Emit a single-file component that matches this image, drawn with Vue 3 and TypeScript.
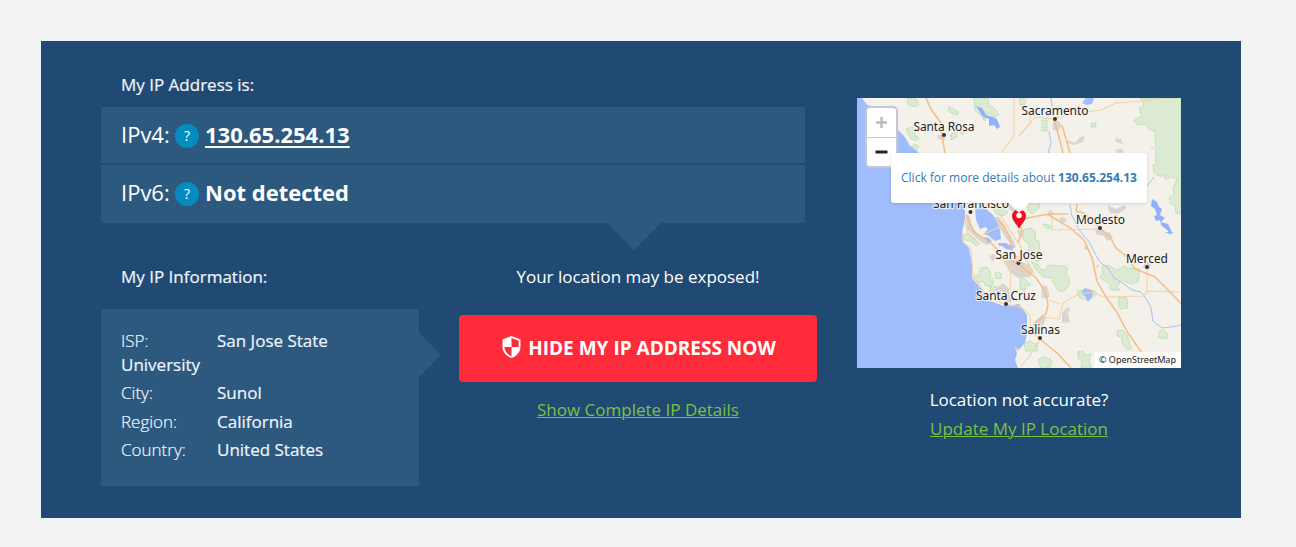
<script setup lang="ts">
interface InfoRow { label: string; value: string }
interface City { name: string; x: number; y: number; w: number; dx: number; dy: number }

const addresses = [
  { label: 'IPv4:', value: '130.65.254.13', link: true },
  { label: 'IPv6:', value: 'Not detected', link: false },
]
const info: InfoRow[] = [
  { label: 'ISP:', value: 'San Jose State University' },
  { label: 'City:', value: 'Sunol' },
  { label: 'Region:', value: 'California' },
  { label: 'Country:', value: 'United States' },
]
const cities: City[] = [
  { name: 'Santa Rosa', x: 56.500, y: 33, w: 61, dx: 87, dy: 37 },
  { name: 'Sacramento', x: 164.500, y: 17, w: 67, dx: 198, dy: 21 },
  { name: 'San Francisco', x: 76, y: 110, w: 76, dx: 113.5, dy: 114 },
  { name: 'Modesto', x: 219, y: 126, w: 49, dx: 243, dy: 130 },
  { name: 'San Jose', x: 138.500, y: 161, w: 47, dx: 161.5, dy: 165 },
  { name: 'Merced', x: 269, y: 165, w: 42, dx: 290, dy: 169 },
  { name: 'Santa Cruz', x: 119, y: 202, w: 60, dx: 149, dy: 206 },
  { name: 'Salinas', x: 164, y: 236, w: 39, dx: 183, dy: 240 },
]
const parks: string[] = [
  'M49 31l6-2 4 4-2 4 5 3-3 3-6-3z', 'M92 9l5 2 5 3-2 3-6-2-3-3z', 'M117 0h14l1 7 6 4 4 6-4 2-7-4-3 8-4-5-6-6z',
  'M50 0l9 1 3 5-4 3-7-2z', 'M94 36l6-2 0 5-6 3z', 'M103 32l5 2-3 3z', 'M54 48l5-2 3 3-4 5z',
  'M185 22h5v11h-5z', 'M234 25l5 0 0 4-5 0z', 'M305 57l4-2 4 2-1 5-6 0z',
  'M284 0h40v116l-5-1-1-7-5-3-1-6 5-2-1-7 4-9-7-2-4 3-1-4-6 0-5-3-1-8 3-2-1-32-6-1-3-6-9 1-3-5 7-4-2-8 5-2z',
  'M170 105l13-1-1 6-7 6-4-4z', 'M135 109l8 0 8 5-4 4-8-2z', 'M106 138l5-3 6 5 6 6-3 2-7-5-5-1z',
  'M116 178l5 0 3-8 6-1 4 6-1 4 4 3-2 6-6 0-3-5-5 2-5-5z', 'M138 175l5-1 2 6-6 1z', 'M133 189l6-1-1 6-5 0z',
  'M166 132l8-2 5 4-1 7 5 3-1 9 4 7-5 3-4-5-6-2 1-9-6-6z', 'M174 163l6 3 5 6 5-1 1-4 16 1 4 2-2 5 3 5 1 6-7 8-4-1-5-7-2-6-9-1-8-9z',
  'M163 179l6 3 5 5-5 1-1 6-5-3z', 'M220 193l10-2 8 2 2 3-8 6-9-2z', 'M177 161l6-1-3 4z',
  'M245 168l6-1 9 5 8-4 3 2 12 1-2 13-7 2-9-4-5 7 3 3-9 0-2-7-9-5 3-5z', 'M262 199l8 1 1 10-8 1-2-5z',
  'M302 234l4-2 5 4-1 5-8-1z', 'M260 233l6-1 4 5 3 9 2 5-5 1-5-7 0-5-5-2z', 'M221 254l5-1 2 4 6-1-2 7 2 7-10 0 1-6-4-4z',
  'M167 246l6-3 5 3 3-1-1 8-8 0-3 0z', 'M181 262l6-3 7 2 0 8-10 2z', 'M186 126l6 1 3 2-5 2z', 'M162 0h7l-1 6-5 1z',
]
const towns: string[] = [
  'M196 23l6 0 3 5-4 5-5-1z', 'M80 37l8 0 0 5-7-1z', 'M211 42l7 3 5-6 5-1-2 6-9 3-7-2z', 'M258 40l6 1 2 5-7-2z', 'M258 52l6-2 3 4-5 2z',
  'M109 117l4 1 2 10 5 7 8 6 5 6-6-1-9-7-8-8z', 'M137 119l5 0 7 12 8 12 2 7-5-3-8-11z',
  'M146 163l12-2 14 6 4 7-3 5-12 1-8-6z', 'M160 132l5 1 1 7-4-2z', 'M132 158l5-2 3 5-5 2z',
  'M139 190l7-5 6 5 0 7 5 4-4 4-14-6z', 'M184 187l6 1 2 7 0 5-7 0z', 'M205 215l5-6 3 1-2 7 2 7-8 1z', 'M176 225l10-9 3 4-4 10-5 6-5 0z',
  'M245 135l8-1 3 6-6 3z', 'M238 130l8 1 1 7-8-2z', 'M250 107l9 4 8-4 3 3-9 6-8-1z', 'M288 163l6 3-1 5-7-1z', 'M156 248l5-3 3 5-4 3z', 'M149 106l9 0 5 8-5 2-5-4z',
  'M202 120l5-1 3 4-5 2z', 'M191 114l3-3 3 6-5 1z', 'M227 149l3-1 1 4-3 0z', 'M238 168l5-2-2 4z', 'M295 48l2 3-3 0z',
]
const minor: string[] = [
  'M157 0v38l-13 17', 'M162 38l10-11', 'M162 38l16-19 18 2 20-5 28-4 15-7 25-2 24-3 22-2',
  'M173 27l0-15 20-2', 'M111 116l-3 8 3 12 8 7', 'M126 137l10-5 10-5', 'M142 115l9 15 12 17 5 13',
  'M195 120v12l49-1', 'M154 169l-1 27-4 9', 'M160 158l8 2 9 15-8-4-19-3-6-10',
  'M162 208l11 9 1 16 8 8', 'M185 219l17 2 4-16 14-8 14-3 13 5 39-1 6-5 31 1', 'M290 169l0 25', 'M192 202l11 4',
  'M183 241l-11 18-9 10', 'M106 134l0 10 8 7 2 25 6 11 12 14 14 5 15 3',
]
const motorways: string[] = [
  'M161 123l10-3 10-2 12-2 18 0', 'M190 116l22 13 15 13 8 18 5 23 9 16 10 14 12 22 14 20 15 16',
  'M197 21l5 18 4 16M205 27l8 28', 'M220 106l-1 7 8 2 16 15 10 9 6 11 10 8 9 13 20 8 18 18 15 16',
  'M109 117l8 17 18 12 14 14 16 9 14 11 9 13 3 13-2 10-12 10', 'M141 122l6 6 5 10 4 17 9 11', 'M69 0l5 11 10 14 1 13 3 17', 'M183 241l17 14 14 15',
  'M162 123l3 10-4 12',
]
const waters: string[] = [
  'M118 110l10 0 8 7 4 7 3 8 1 9-6 2-6-5-5-2 4-5-3-2-5 2-4-9z', 'M127 139l5 1 3 4-4 1z', 'M141 145l8 0 3 2 6 1-3 4-6-1-4-3-3 0z',
  'M228 190l5 2 3 1-1 6-4 5-3-6-4-3z', 'M225 5l4-5h8l-2 6-5 1z',
]
const lakes: string[] = [
  'M119 8l6 2 4 7 7 2 4 2 3 8-3 2-3-4-5 1 0-7-6-2z', 'M295 101l5 3 2 5 3 2-2 6 5 3-4 4 7 2 3 6-4 0-6-5-1-5-4 1-2-5 3-1-2-6-4-3z', 'M309 129l3 0 3 5-2 3z', 'M308 134h9l-4 2z',
]
</script>

<template>
  <main class="panel">
    <section class="left">
      <h2 class="heading">My IP Address is:</h2>
      <div class="addresses">
        <div v-for="a in addresses" :key="a.label" class="address">
          <span class="kind">{{ a.label }}</span>
          <span class="help">?</span>
          <a v-if="a.link" class="value linked">{{ a.value }}</a>
          <strong v-else class="value">{{ a.value }}</strong>
        </div>
      </div>
      <div class="lower">
        <div class="details">
          <h2 class="heading info-heading">My IP Information:</h2>
          <div class="info">
            <p v-for="row in info" :key="row.label"><span>{{ row.label }}</span>{{ row.value }}</p>
          </div>
        </div>
        <div class="action">
          <p class="exposed">Your location may be exposed!</p>
          <button class="hide-ip">
            <svg width="19" height="22" viewBox="0 0 19 22">
              <path fill="#fff" fill-rule="evenodd" d="M9.500 0L18.500 3.500V10C18.500 16 15 20 9.500 22C4 20 .5 16 .5 10V3.500ZM9.500 2V11H2.300C2.900 15.500 5.500 18.600 9.500 20.200V11H16.700V4.700Z" />
            </svg>
            <span>HIDE MY IP ADDRESS NOW</span>
          </button>
          <a class="green">Show Complete IP Details</a>
        </div>
      </div>
    </section>

    <aside class="right">
      <div class="map">
        <svg class="tiles" width="324" height="270" viewBox="0 0 324 270">
          <rect width="324" height="270" fill="#f4f0ea" />
          <path v-for="p in parks" :key="p" :d="p" class="park" />
          <path v-for="p in towns" :key="p" :d="p" class="town" />
          <path fill="#9fbdfd" d="M0 0H5L10 7 20 9 29 15 38 24 41 32 48 39 53 48 61 54 76 68 84 80 94 91 100 102 108 110 108 120 105 135 106 143 112 150 115 166 115 180 122 188 133 203 147 208 162 206 170 217 170 235 168 245 162 251 157 248 160 255 158 262 161 270H0Z" />
          <path v-for="p in waters" :key="p" :d="p" fill="#9fbdfd" />
          <path v-for="p in lakes" :key="p" :d="p" fill="#91b1fb" />
          <path class="river" d="M213 107l2 11 8 15 10 12 4 9 6 10 8 6 6 10 10 6 8 6 9 2 6 8 4 8 2 13 9 7 9-1 10-2M192 33l2 12-3 11M290 88l7-9M194 0l2 17" />
          <path v-for="p in minor" :key="p" :d="p" class="road" />
          <path v-for="p in motorways" :key="p" :d="p" class="motorway" />
          <g v-for="c in cities" :key="c.name">
            <circle :cx="c.dx" :cy="c.dy" r="2" fill="#333" />
            <text :x="c.x" :y="c.y" :textLength="c.w" class="city">{{ c.name }}</text>
          </g>
          <g>
            <path d="M162 131c-2-5-7-8-7-13.500a7 6 0 0 1 14 0c0 5.500-5 8.500-7 13.500z" fill="#f20d1c" />
            <circle cx="162" cy="117.500" r="2.800" fill="#fff" />
          </g>
        </svg>
        <div class="zoom">
          <svg width="29" height="58" viewBox="0 0 29 58">
            <path d="M0 29.500H29" stroke="#ccc" />
            <path d="M14.500 9v11M9 14.500h11" stroke="#bbb" stroke-width="2.400" />
            <path d="M8.500 44h12" stroke="#222" stroke-width="3" />
          </svg>
        </div>
        <a class="popup">Click for more details about <b>130.65.254.13</b></a>
        <span class="credit">© OpenStreetMap</span>
      </div>
      <p class="accurate">Location not accurate?</p>
      <a class="green">Update My IP Location</a>
    </aside>
  </main>
</template>

<style>
body { background: #f1f3f5; }
</style>

<style scoped>
* { box-sizing: border-box; }
.panel { width: 1200px; height: 477px; margin: 41px 0 0 41px; padding: 0 60px; background: #204a73; display: flex; gap: 40px; color: #fff; font: 17px/24px "Open Sans", sans-serif; }
.left { width: 716px; padding-top: 32px; }
.heading { margin: 0 0 10px 20px; font-size: 17px; line-height: 24px; font-weight: 500; color: #eef5fc; -webkit-text-stroke: .2px #eef5fc; }
.addresses { position: relative; width: 704px; display: grid; grid-template-rows: 56px 58px; gap: 2px; }
.addresses::after { content: ""; position: absolute; left: 506px; top: 116px; border: 27px solid transparent; border-top-color: #2d597f; border-bottom: 0; }
.address { background: #2d597f; padding-left: 20px; display: flex; align-items: center; font-size: 22px; }
.address:last-child { padding-bottom: 2px; }
.kind { width: 54px; white-space: nowrap; padding-bottom: 3px; }
.help { width: 24px; height: 24px; border-radius: 50%; background: #058bc0; font-size: 14px; line-height: 24px; text-align: center; margin: 1px 6px 0 0; }
.value { font-weight: 700; padding-bottom: 3px; }
.linked { text-decoration: underline; text-decoration-thickness: 2px; text-underline-offset: 3px; }
.lower { display: flex; gap: 40px; }
.details { width: 318px; padding-top: 42px; }
.info-heading { margin-bottom: 20px; }
.info { position: relative; height: 177px; background: #2d597f; padding: 20px 80px 0 20px; font-weight: 500; color: #eef5fc; -webkit-text-stroke: .2px #eef5fc; }
.info::after { content: ""; position: absolute; left: 318px; top: 24px; border: 22px solid transparent; border-left-color: #2d597f; border-right: 0; }
.info p { margin: 0 0 4.400px; }
.info span { display: inline-block; width: 96px; font-weight: 300; }
.action { width: 358px; padding-top: 42px; display: flex; flex-direction: column; align-items: center; }
.exposed { margin: 0 0 26px; }
.hide-ip { width: 358px; height: 67px; border: 0; border-radius: 4px; background: #ff2b3a; color: #fff; font: 700 19px/24px "Open Sans", sans-serif; display: flex; align-items: center; justify-content: center; gap: 7px; margin-bottom: 16px; padding: 0 0 2px 2px; white-space: nowrap; }
.hide-ip svg { position: relative; top: -1px; }
.green { color: #7ac142; text-decoration: underline; text-decoration-thickness: 1px; }
.right { width: 324px; padding-top: 57px; display: flex; flex-direction: column; align-items: center; }
.map { position: relative; width: 324px; height: 270px; overflow: hidden; }
.tiles { display: block; }
.park { fill: #dce9d3; stroke: #a3dba0; stroke-width: .8; stroke-dasharray: 2 1; }
.town { fill: #dad5d1; }
.river { fill: none; stroke: #a6c4ef; stroke-width: 1; }
.road { fill: none; stroke: #f5d3a0; stroke-width: 1.100; }
.motorway { fill: none; stroke: #f3bf86; stroke-width: 1.500; }
.city { font: 12px "Noto Sans", sans-serif; fill: #222; stroke: #f8f6f2; stroke-width: 2.400px; stroke-opacity: .8; paint-order: stroke; }
.zoom { position: absolute; left: 10px; top: 10px; width: 29px; height: 58px; background: #fff; border-radius: 3px; box-shadow: 0 0 0 2px #c8c9d0; }
.popup { position: absolute; left: 34px; top: 55px; width: 256px; height: 50px; background: #fff; border-radius: 3px; color: #337ab7; font-size: 12px; line-height: 50px; text-align: center; white-space: nowrap; box-shadow: 0 1px 3px #0002; }
.popup::after { content: ""; position: absolute; left: 118px; top: 50px; border: 10px solid transparent; border-top-color: #fff; border-bottom: 0; }
.credit { position: absolute; right: 0; bottom: 0; width: 87px; height: 16px; background: #fffc; color: #222; font: 9px/16px "Noto Sans", sans-serif; text-align: center; white-space: nowrap; }
.accurate { margin: 20px 0 5px; }
</style>
